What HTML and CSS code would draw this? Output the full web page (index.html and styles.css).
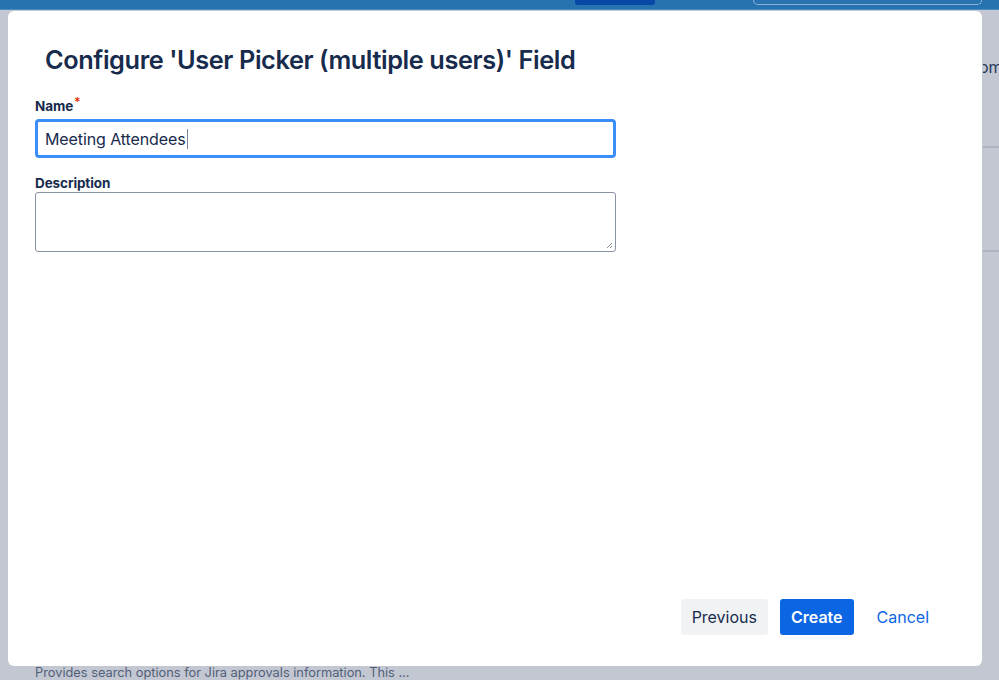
FILE: index.html
```html
<!DOCTYPE html>
<html>
<head>
<meta charset="utf-8">
<link rel="stylesheet" href="styles.css">
</head>
<body>
<header class="topbar">
  <div class="topbar-btn"></div>
  <div class="topbar-search"></div>
</header>
<main class="page">
  <div class="page-side">
    <div class="side-text">om</div>
    <div class="side-row"></div>
    <div class="side-row"></div>
  </div>
  <div class="page-foot">Provides search options for Jira approvals information. This ...</div>
</main>
<div class="dialog">
  <h1 class="dialog-title">Configure 'User Picker (multiple users)' Field</h1>
  <form class="dialog-form">
    <div class="field">
      <label class="field-label">Name<span class="req">*</span></label>
      <div class="input focused"><span class="input-text">Meeting Attendees</span><span class="caret"></span></div>
    </div>
    <div class="field">
      <label class="field-label field-label-tight">Description</label>
      <div class="textarea">
        <svg class="grip" width="8" height="8" viewBox="0 0 8 8"><path d="M7 2 L2 7 M7 5 L5 7" stroke="#8a8f99" stroke-width="1" fill="none"/></svg>
      </div>
    </div>
  </form>
  <div class="dialog-actions">
    <button class="btn btn-sub" type="button">Previous</button>
    <button class="btn btn-primary" type="button">Create</button>
    <button class="btn btn-link" type="button">Cancel</button>
  </div>
</div>
</body>
</html>
```
FILE: styles.css
```css
* { box-sizing: border-box; }
html, body { margin: 0; padding: 0; }
body {
  width: 999px;
  height: 680px;
  overflow: hidden;
  background: #c3c7d1;
  font-family: Inter, "Noto Sans", sans-serif;
  color: #172b4d;
  position: relative;
}
.topbar {
  height: 10px;
  background: #2673b0;
  display: flex;
  align-items: flex-start;
  border-bottom: 1px solid #4a8cc2;
}
.topbar-btn {
  margin-left: 575px;
  width: 80px;
  height: 5px;
  background: #0747a6;
  border-radius: 0 0 3px 3px;
}
.topbar-search {
  margin-left: 98px;
  width: 229px;
  height: 5px;
  border: 1px solid #8bb2d6;
  border-top: none;
  border-radius: 0 0 5px 5px;
}
.page {
  height: 670px;
  display: flex;
  flex-direction: column;
  justify-content: space-between;
}
.page-side {
  margin-left: 983px;
  padding-top: 48px;
  overflow: hidden;
}
.side-text {
  font-size: 16px;
  line-height: 18px;
  color: #253858;
  margin-left: -4px;
  white-space: nowrap;
}
.side-row {
  height: 104px;
  border-bottom: 2px solid #aeb4bf;
}
.side-text + .side-row { height: 72px; }
.page-foot {
  padding-left: 35px;
  font-size: 12.8px;
  line-height: 16px;
  color: #505f79;
  margin-bottom: -1px;
}
.dialog {
  position: absolute;
  left: 8px;
  top: 11px;
  width: 974px;
  height: 655px;
  background: #fff;
  border-radius: 6px;
  display: flex;
  flex-direction: column;
  padding: 0 27px 0 27px;
}
.dialog-title {
  margin: 31px 0 0 10px;
  font-size: 25.3px;
  line-height: 36px;
  font-weight: 600;
  color: #172b4d;
  letter-spacing: -0.4px;
}
.dialog-form {
  margin-top: 20px;
  width: 581px;
}
.field { margin-bottom: 17px; }
.field-label {
  display: block;
  font-size: 13.5px;
  font-weight: 700;
  line-height: 16px;
  color: #172b4d;
  margin-bottom: 4px;
  letter-spacing: -0.1px;
}
.field-label-tight { margin-bottom: 1px; }
.req {
  color: #de350b;
  font-size: 12px;
  position: relative;
  top: -5px;
  margin-left: 1px;
}
.input {
  height: 39px;
  border: 3px solid #3b8dfa;
  border-radius: 4px;
  display: flex;
  align-items: center;
  padding-left: 7px;
  font-size: 16px;
  color: #172b4d;
}
.input-text { letter-spacing: -0.1px; }
.caret {
  display: inline-block;
  width: 1px;
  height: 20px;
  background: #7a869a;
  margin-left: 1px;
}
.textarea {
  height: 60px;
  border: 1px solid #8993a4;
  border-radius: 3px;
  display: flex;
  justify-content: flex-end;
  align-items: flex-end;
  padding: 2px;
}
.dialog-actions {
  margin-top: auto;
  margin-bottom: 31px;
  display: flex;
  justify-content: flex-end;
  align-items: center;
  gap: 12px;
  padding-right: 15px;
}
.btn {
  font-family: inherit;
  font-size: 16px;
  height: 36px;
  border: none;
  border-radius: 3px;
  padding: 0 11px;
  cursor: pointer;
  line-height: 36px;
}
.btn-sub { background: #f1f2f4; color: #172b4d; font-weight: 400; }
.btn-primary { background: #0c66e4; color: #fff; font-weight: 600; }
.btn-link { background: transparent; color: #0c66e4; font-weight: 400; }
```
